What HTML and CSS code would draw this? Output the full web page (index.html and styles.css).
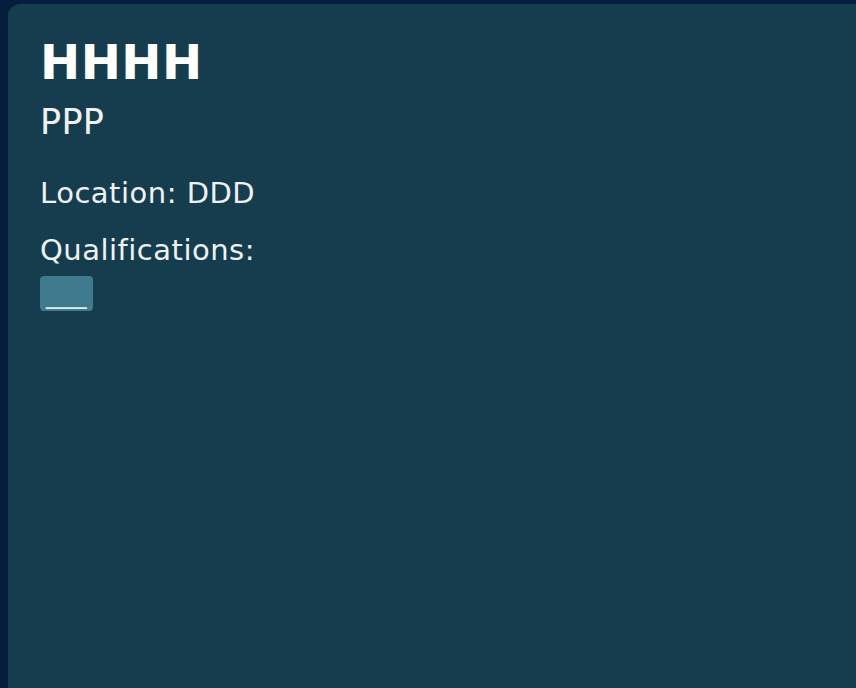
FILE: index.html
```html
<!DOCTYPE html>
<html>
<head>
<meta charset="utf-8">
<link rel="stylesheet" href="styles.css">
</head>
<body>
<div class="card">
  <h1 class="name">HHHH</h1>
  <div class="role">PPP</div>
  <div class="location">Location: DDD</div>
  <div class="quals-label">Qualifications:</div>
  <div class="quals">
    <span class="badge">___</span>
  </div>
</div>
</body>
</html>
```
FILE: styles.css
```css
html, body {
  margin: 0;
  padding: 0;
  height: 100%;
  overflow: hidden;
}
body {
  background: #061d3d;
  font-family: "DejaVu Sans", sans-serif;
  color: #eef2f4;
  padding: 4px 0 0 8px;
  box-sizing: border-box;
}
.card {
  background: #163d4d;
  border-radius: 12px 0 0 0;
  height: 100%;
  padding: 30px 30px 0 32px;
  box-sizing: border-box;
}
.name {
  margin: 0;
  font-size: 48px;
  font-weight: bold;
  line-height: normal;
  letter-spacing: 0.5px;
  color: #ffffff;
}
.role {
  margin-top: 12px;
  font-size: 35px;
  line-height: normal;
  letter-spacing: 0.3px;
}
.location {
  margin-top: 34px;
  font-size: 29px;
  line-height: normal;
  letter-spacing: 0.5px;
}
.quals-label {
  margin-top: 23px;
  font-size: 29px;
  line-height: normal;
  letter-spacing: 0.5px;
}
.quals {
  margin-top: 9px;
  display: flex;
}
.badge {
  background: #3f7b8f;
  border-radius: 4px;
  font-size: 27px;
  line-height: 35px;
  height: 35px;
  padding: 0 6px;
  color: #e6eef0;
  overflow: hidden;
}
```
